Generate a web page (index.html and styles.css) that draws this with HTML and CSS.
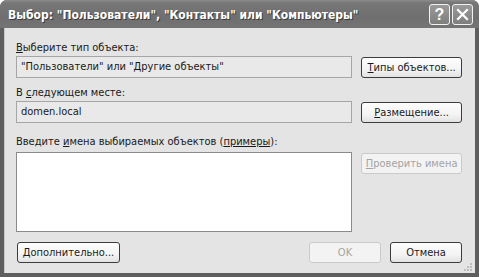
FILE: index.html
```html
<!DOCTYPE html>
<html>
<head>
  <title>Выбор объектов</title>
  <link rel="stylesheet" href="styles.css">
</head>
<body>
  <div class="window">
    <!-- Title bar -->
    <div class="title-bar">
      <span class="title-text">Выбор: "Пользователи", "Контакты" или "Компьютеры"</span>
      <div class="title-buttons">
        <span class="title-btn help">?</span>
        <span class="title-btn close">
          <svg width="13" height="13" viewBox="0 0 13 13">
            <path d="M2 2 L11 11 M11 2 L2 11" stroke="#fff" stroke-width="2.2" stroke-linecap="square"/>
          </svg>
        </span>
      </div>
    </div>

    <!-- Dialog body -->
    <div class="frame">
      <div class="label first"><u>В</u>ыберите тип объекта:</div>
      <div class="row">
        <div class="field">"Пользователи" или "Другие объекты"</div>
        <button class="btn side"><u>Т</u>ипы объектов...</button>
      </div>

      <div class="label"><span>В </span><u>с</u>ледующем месте:</div>
      <div class="row">
        <div class="field">domen.local</div>
        <button class="btn side"><u>Р</u>азмещение...</button>
      </div>

      <div class="label names">Введите <u>и</u>мена выбираемых объектов (<u>примеры</u>):</div>
      <div class="row top">
        <div class="names-box"></div>
        <button class="btn side disabled"><u>П</u>роверить имена</button>
      </div>

      <div class="bottom-row">
        <button class="btn more"><u>Д</u>ополнительно...</button>
        <div class="bottom-right">
          <button class="btn ok disabled">OK</button>
          <button class="btn cancel">Отмена</button>
        </div>
      </div>

      <svg class="grip" width="10" height="10" viewBox="0 0 10 10">
        <rect x="7" y="1" width="2" height="2" fill="#bdbdbd"/>
        <rect x="4" y="4" width="2" height="2" fill="#bdbdbd"/>
        <rect x="7" y="4" width="2" height="2" fill="#bdbdbd"/>
        <rect x="1" y="7" width="2" height="2" fill="#bdbdbd"/>
        <rect x="4" y="7" width="2" height="2" fill="#bdbdbd"/>
        <rect x="7" y="7" width="2" height="2" fill="#bdbdbd"/>
      </svg>
    </div>
  </div>
</body>
</html>
```

FILE: styles.css
```css
/* XP style object picker dialog, grayscale */
body {
  margin: 0;
  font-family: 'DejaVu Sans Condensed', 'DejaVu Sans', sans-serif;
  font-size: 11px;
  color: #1a1a1a;
  background-color: #fff;
}

.window {
  width: 479px;
  height: 277px;
  display: flex;
  flex-direction: column;
  background-color: #5e5e5e;
  border-radius: 7px 7px 0 0;
  overflow: hidden;
}

.title-bar {
  height: 28px;
  flex-shrink: 0;
  display: flex;
  align-items: center;
  justify-content: space-between;
  padding: 0 6px 0 8px;
  background: linear-gradient(#8c8c8c 0, #767676 3px, #6f6f6f 60%, #747474 100%);
  box-sizing: border-box;
}

.title-text {
  color: #fff;
  font-family: 'DejaVu Sans Condensed', 'DejaVu Sans', sans-serif;
  font-weight: bold;
  font-size: 12px;
  text-shadow: 1px 1px 0 #3a3a3a;
  white-space: nowrap;
  padding-top: 1px;
}

.title-buttons {
  display: flex;
  gap: 2px;
}

.title-btn {
  width: 19px;
  height: 19px;
  border: 1px solid #f2f2f2;
  border-radius: 3px;
  background: linear-gradient(#9a9a9a, #7e7e7e);
  display: flex;
  align-items: center;
  justify-content: center;
  color: #fff;
  font-family: 'Liberation Sans', Arial, sans-serif;
  font-weight: bold;
  font-size: 16px;
  line-height: 19px;
}

.frame {
  position: relative;
  flex: 1;
  margin: 0 4px 4px 4px;
  padding: 13px 13px 0 11px;
  background-color: #e4e4e4;
  border-left: 1px solid #c8c8c8;
  box-sizing: border-box;
}

.label {
  height: 14px;
  line-height: 14px;
  margin-top: 8px;
  margin-bottom: 1px;
  white-space: nowrap;
}

.label.first {
  margin-top: 0;
}

.label.names {
  margin-top: 12px;
  margin-bottom: 3px;
}

.row {
  display: flex;
  align-items: center;
  gap: 9px;
}

.row.top {
  align-items: flex-start;
}

.field {
  width: 337px;
  height: 22px;
  box-sizing: border-box;
  border: 1px solid #a6a6a6;
  background-color: #e9e9e9;
  padding: 0 4px;
  line-height: 20px;
  white-space: nowrap;
}

.names-box {
  width: 337px;
  height: 80px;
  box-sizing: border-box;
  border: 1px solid #8a8a8a;
  background-color: #fff;
}

.btn {
  height: 21px;
  box-sizing: border-box;
  border: 1px solid #3c3c3c;
  border-radius: 3px;
  background: linear-gradient(#fdfdfd 0%, #f4f4f4 60%, #e2e2e2 100%);
  font-family: 'DejaVu Sans Condensed', 'DejaVu Sans', sans-serif;
  font-size: 11px;
  color: #1a1a1a;
  padding: 0;
  white-space: nowrap;
}

.btn.side {
  width: 101px;
}

.row.top .btn.side {
  margin-top: 1px;
}

.btn.disabled {
  border-color: #cacaca;
  color: #a3a3a3;
  background: #f3f3f3;
}

.bottom-row {
  display: flex;
  justify-content: space-between;
  margin-top: 10px;
}

.btn.more {
  width: 103px;
  margin-left: 1px;
}

.bottom-right {
  display: flex;
  gap: 9px;
}

.btn.ok,
.btn.cancel {
  width: 72px;
}

.grip {
  position: absolute;
  right: 2px;
  bottom: 1px;
}
```
